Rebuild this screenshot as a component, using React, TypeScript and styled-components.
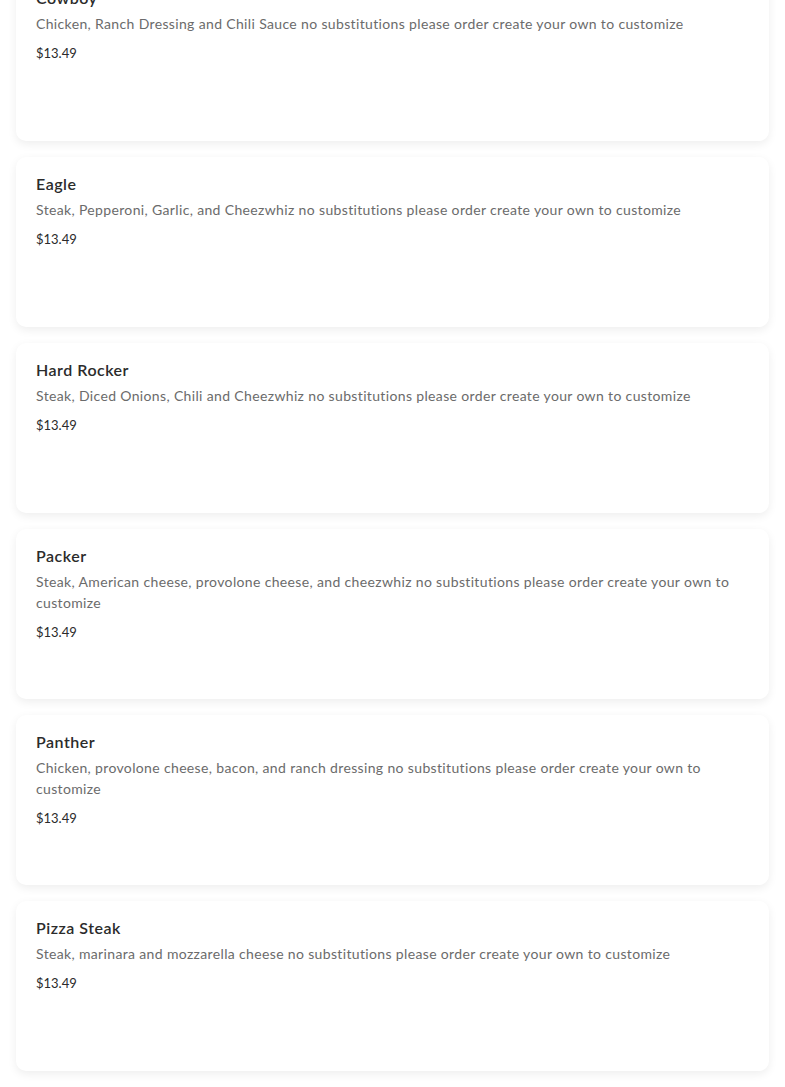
import styled, { createGlobalStyle } from "styled-components";

const GlobalStyle = createGlobalStyle`
  html, body {
    margin: 0;
    padding: 0;
    background: #ffffff;
    font-family: "Lato", "Liberation Sans", sans-serif;
    overflow: hidden;
  }
`;

const MenuList = styled.div`
  display: flex;
  flex-direction: column;
  gap: 16px;
  padding: 0 16px 24px;
  margin-top: -29px;
`;

const ItemCard = styled.div`
  box-sizing: border-box;
  height: 170px;
  padding: 16px 20px;
  background: #ffffff;
  border-radius: 10px;
  box-shadow: 0 3px 10px rgba(0, 0, 0, 0.07);
`;

const ItemName = styled.h3`
  margin: 0;
  font-size: 16px;
  line-height: 22px;
  font-weight: 600;
  letter-spacing: 0.5px;
  color: #2b2b2b;
`;

const ItemDescription = styled.p`
  margin: 4px 0 0;
  font-size: 14px;
  line-height: 21px;
  letter-spacing: 0.35px;
  color: #6b6b6b;
`;

const ItemPrice = styled.div`
  margin-top: 9px;
  font-size: 13px;
  line-height: 20px;
  color: #2b2b2b;
`;

const items = [
  { name: "Cowboy", description: "Chicken, Ranch Dressing and Chili Sauce no substitutions please order create your own to customize" },
  { name: "Eagle", description: "Steak, Pepperoni, Garlic, and Cheezwhiz no substitutions please order create your own to customize" },
  { name: "Hard Rocker", description: "Steak, Diced Onions, Chili and Cheezwhiz no substitutions please order create your own to customize" },
  { name: "Packer", description: "Steak, American cheese, provolone cheese, and cheezwhiz no substitutions please order create your own to customize" },
  { name: "Panther", description: "Chicken, provolone cheese, bacon, and ranch dressing no substitutions please order create your own to customize" },
  { name: "Pizza Steak", description: "Steak, marinara and mozzarella cheese no substitutions please order create your own to customize" },
];

export default function App() {
  return (
    <>
      <GlobalStyle />
      <MenuList>
        {items.map((item) => (
          <ItemCard key={item.name}>
            <ItemName>{item.name}</ItemName>
            <ItemDescription>{item.description}</ItemDescription>
            <ItemPrice>$13.49</ItemPrice>
          </ItemCard>
        ))}
      </MenuList>
    </>
  );
}
